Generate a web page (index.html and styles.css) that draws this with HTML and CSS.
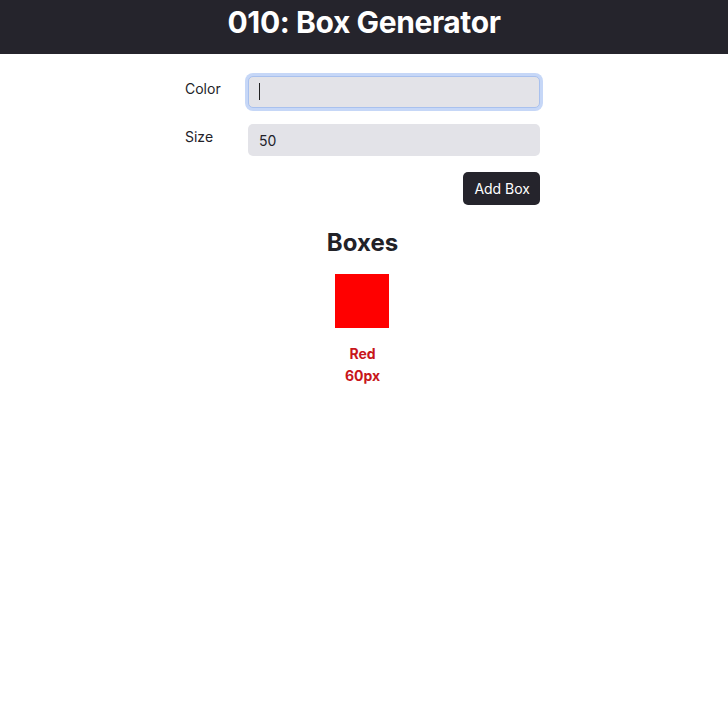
FILE: index.html
```html
<!DOCTYPE html>
<html lang="en">
<head>
<meta charset="utf-8">
<title>010: Box Generator</title>
<link rel="stylesheet" href="styles.css">
</head>
<body>
<header class="top-bar">
  <h1 class="title">010: Box Generator</h1>
</header>
<main class="content">
  <form class="box-form">
    <label class="field-label" for="color">Color</label>
    <div class="field-wrap">
      <input class="field field-focused" id="color" type="text" value="">
      <span class="caret"></span>
    </div>
    <label class="field-label" for="size">Size</label>
    <div class="field-wrap">
      <input class="field" id="size" type="text" value="50">
    </div>
    <div class="actions">
      <button class="add-btn" type="button">Add Box</button>
    </div>
  </form>
  <section class="boxes">
    <h2 class="boxes-title">Boxes</h2>
    <div class="box-item">
      <div class="box" style="background:#ff0000"></div>
      <div class="box-label">Red</div>
      <div class="box-label">60px</div>
    </div>
  </section>
</main>
</body>
</html>
```

FILE: styles.css
```css
* { box-sizing: border-box; }
html, body { margin: 0; padding: 0; background: #fff; }
body {
  font-family: Inter, "Noto Sans", sans-serif;
  color: #222228;
}
.top-bar {
  background: #25242c;
  height: 54px;
  display: flex;
  align-items: center;
  justify-content: center;
}
.title {
  margin: 0;
  color: #fff;
  font-size: 30px;
  font-weight: 700;
  letter-spacing: -0.4px;
  line-height: 1;
  padding-bottom: 10px;
}
.content {
  display: flex;
  flex-direction: column;
  align-items: center;
}
.box-form {
  width: 355px;
  margin: 22px 0 0 -3px;
  display: grid;
  grid-template-columns: 63px 292px;
  row-gap: 16px;
  align-items: start;
}
.field-label {
  font-size: 14px;
  line-height: 20px;
  padding-top: 3px;
}
.field-wrap { position: relative; }
.field {
  display: block;
  width: 100%;
  height: 32px;
  border: 1px solid transparent;
  border-radius: 5px;
  background: #e3e3e8;
  font-family: inherit;
  font-size: 14px;
  color: #222228;
  padding: 0 10px;
  outline: none;
}
.field-focused {
  border-color: #a9c1ee;
  box-shadow: 0 0 0 3px #c6d7f7;
}
.caret {
  position: absolute;
  left: 11px;
  top: 7px;
  width: 1px;
  height: 17px;
  background: #222;
}
.actions {
  grid-column: 1 / 3;
  display: flex;
  justify-content: flex-end;
}
.add-btn {
  background: #25242c;
  color: #fff;
  border: none;
  border-radius: 5px;
  height: 33px;
  padding: 0 10px 0 11px;
  font-family: inherit;
  font-size: 14px;
}
.boxes {
  display: flex;
  flex-direction: column;
  align-items: center;
  margin-left: -3px;
}
.boxes-title {
  margin: 23px 0 0;
  font-size: 24px;
  font-weight: 700;
  line-height: 30px;
  color: #222228;
}
.box-item {
  display: flex;
  flex-direction: column;
  align-items: center;
  margin-top: 16px;
}
.box {
  width: 54px;
  height: 54px;
  margin-bottom: 15px;
}
.box-label {
  font-size: 14px;
  font-weight: 700;
  line-height: 22px;
  color: #c8161b;
}
```
